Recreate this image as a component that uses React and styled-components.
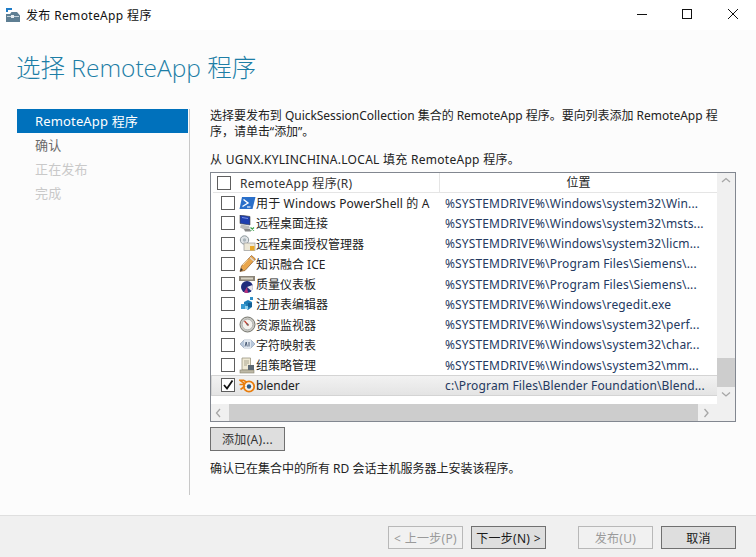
import React from 'react';
import styled, { createGlobalStyle } from 'styled-components';

const Global = createGlobalStyle`
  html, body { margin: 0; padding: 0; background: #fff; }
  body { font-family: "Noto Sans", "Noto Sans CJK SC", sans-serif; font-size: 12px; color: #1a1a1a; }
`;

const PowerShellIcon = () => (
  <svg width="17" height="17" viewBox="0 0 17 17">
    <path d="M3 2h13.5l-3 12H.5z" fill="#2a6fc9" />
    <path d="M4.5 4.5l4.5 3.5-5.5 3.5" fill="none" stroke="#fff" strokeWidth="1.4" />
    <path d="M8 12h3.5" stroke="#fff" strokeWidth="1.1" />
  </svg>
);

const DesktopIcon = () => (
  <svg width="17" height="17" viewBox="0 0 17 17">
    <path d="M1 0l10 1.5v8.5L1 8.5z" fill="#1f3fb0" stroke="#444" strokeWidth=".6" />
    <path d="M3 2.5l6 1" stroke="#7d96e6" strokeWidth="1" />
    <path d="M2 9.5l8 1.5 1 2.5-6 1-4-2z" fill="#bbb" />
    <path d="M5 14h6l1 2.5H6z" fill="#888" />
    <path d="M11.5 12.5l3.5 3m0-3l-3.5 3" stroke="#3aa04a" strokeWidth="1.2" />
  </svg>
);

const LicenseIcon = () => (
  <svg width="17" height="17" viewBox="0 0 17 17">
    <circle cx="5.5" cy="5" r="4.2" fill="#dfe3e6" stroke="#8d979c" />
    <circle cx="5.5" cy="5" r="1.7" fill="#a9b4ba" />
    <rect x="5" y="8" width="11" height="7.5" fill="#ece7d6" stroke="#999" strokeWidth=".7" />
    <rect x="11" y="11" width="4.5" height="4.5" fill="#e8a92a" />
  </svg>
);

const PencilIcon = () => (
  <svg width="17" height="17" viewBox="0 0 17 17">
    <path d="M12.5 .5l4 3.5L6 15.5l-5 1L2.5 11z" fill="#e9a64c" stroke="#8b5a2b" strokeWidth=".7" />
    <path d="M11 2.5l4 3.5" stroke="#d9d9d9" strokeWidth="1.4" />
    <path d="M4 10l5-5.5" stroke="#f7d9a4" strokeWidth="1" />
    <path d="M1 16.5L2 13l2 2z" fill="#333" />
  </svg>
);

const DashboardIcon = () => (
  <svg width="17" height="17" viewBox="0 0 17 17">
    <rect x="0" y="0" width="16" height="5" fill="#8b8478" />
    <rect x="2" y="1.5" width="12" height="2" fill="#d8d3c4" />
    <circle cx="8" cy="11" r="6" fill="#1f2c7c" />
    <path d="M8 11l5.5-2a6 6 0 0 1-1 6z" fill="#e8e6ef" />
    <path d="M8 11l-3 5a6 6 0 0 0 4 1z" fill="#b8337d" />
  </svg>
);

const RegistryIcon = () => (
  <svg width="17" height="17" viewBox="0 0 17 17">
    <path d="M5 6l4-2 4 2v5l-4 3-4-3z" fill="#1f7fb8" />
    <rect x="2" y="8" width="5" height="5" fill="#3a9bd0" />
    <rect x="9" y="7" width="4" height="4" fill="#155f95" />
    <rect x="11" y="1" width="3" height="3" fill="#2f8fc8" />
    <rect x="6" y="10" width="3" height="3" fill="#8fd0ee" />
  </svg>
);

const MonitorIcon = () => (
  <svg width="17" height="17" viewBox="0 0 17 17">
    <circle cx="8.5" cy="8.5" r="7.5" fill="#c9c9c4" stroke="#77776f" />
    <circle cx="8.5" cy="8.5" r="5.3" fill="#f4f3ee" stroke="#999" strokeWidth=".6" />
    <path d="M5.5 5l4 4.5" stroke="#c0392b" strokeWidth="1.2" />
    <circle cx="8.5" cy="8.5" r="1" fill="#666" />
  </svg>
);

const CharMapIcon = () => (
  <svg width="17" height="17" viewBox="0 0 17 17">
    <path d="M1 8l4-4h7l4 4-4 4H5z" fill="#b6c6da" stroke="#8c9bb0" strokeWidth=".6" />
    <rect x="5" y="4" width="7" height="8" fill="#dfe6ef" />
    <path d="M6 10.5L7.2 6l1 4.5M10 6v4.5" fill="none" stroke="#41526e" strokeWidth=".9" />
  </svg>
);

const PolicyIcon = () => (
  <svg width="17" height="17" viewBox="0 0 17 17">
    <path d="M3 1h8.5v12H3z" fill="#efe9d5" stroke="#9b9580" strokeWidth=".8" />
    <path d="M5 4h5M5 6h5M5 8h3" stroke="#9b9580" strokeWidth=".8" />
    <rect x="1" y="13" width="14" height="3" fill="#bdb8a6" stroke="#87826f" strokeWidth=".6" />
    <rect x="9" y="8" width="6" height="5" fill="#5e6a75" />
  </svg>
);

const BlenderIcon = () => (
  <svg width="17" height="17" viewBox="0 0 17 17">
    <path d="M.5 7.5h6L.8 3.2h3.8l6 3.6" fill="none" stroke="#e87d0d" strokeWidth="1.6" />
    <circle cx="10" cy="9.5" r="5.2" fill="#f7f2ea" stroke="#e87d0d" strokeWidth="1.8" />
    <circle cx="10" cy="9.5" r="2.2" fill="#265787" />
    <path d="M1.5 12.5l4.5-3.5" stroke="#e87d0d" strokeWidth="1.6" />
  </svg>
);

const ServerIcon = () => (
  <svg width="15" height="15" viewBox="0 0 15 15">
    <path d="M0 0h6v2H2v2H0z" fill="#1e7cc8" />
    <path d="M0 6h4l1.5-2H11l3 3.5V14H0z" fill="#5f7f93" />
    <rect x="1" y="8" width="12" height="1" fill="#c5d3dc" />
    <rect x="5" y="7" width="3" height="3" fill="#e6edf1" />
  </svg>
);

const ArrowIcon = ({ dir }) => {
  const paths = {
    up: 'M1 5l4-3.5L9 5',
    down: 'M1 1.5L5 5l4-3.5',
    left: 'M5 1L1.5 5 5 9',
    right: 'M1.5 1L5 5 1.5 9',
  };
  return (
    <svg width="10" height="10" viewBox="0 0 10 10">
      <path d={paths[dir]} fill="none" stroke="#a6a6a6" strokeWidth="1.3" />
    </svg>
  );
};

const rows = [
  { icon: <PowerShellIcon />, name: '用于 Windows PowerShell 的 A', path: '%SYSTEMDRIVE%\\Windows\\system32\\Win...', wide: true },
  { icon: <DesktopIcon />, name: '远程桌面连接', path: '%SYSTEMDRIVE%\\Windows\\system32\\msts...' },
  { icon: <LicenseIcon />, name: '远程桌面授权管理器', path: '%SYSTEMDRIVE%\\Windows\\system32\\licm...' },
  { icon: <PencilIcon />, name: '知识融合 ICE', path: '%SYSTEMDRIVE%\\Program Files\\Siemens\\...' },
  { icon: <DashboardIcon />, name: '质量仪表板', path: '%SYSTEMDRIVE%\\Program Files\\Siemens\\...' },
  { icon: <RegistryIcon />, name: '注册表编辑器', path: '%SYSTEMDRIVE%\\Windows\\regedit.exe' },
  { icon: <MonitorIcon />, name: '资源监视器', path: '%SYSTEMDRIVE%\\Windows\\system32\\perf...' },
  { icon: <CharMapIcon />, name: '字符映射表', path: '%SYSTEMDRIVE%\\Windows\\system32\\char...' },
  { icon: <PolicyIcon />, name: '组策略管理', path: '%SYSTEMDRIVE%\\Windows\\system32\\mm...' },
  { icon: <BlenderIcon />, name: 'blender', path: 'c:\\Program Files\\Blender Foundation\\Blend...', checked: true },
];

const steps = [
  { label: 'RemoteApp 程序', state: 'active' },
  { label: '确认', state: 'normal' },
  { label: '正在发布', state: 'disabled' },
  { label: '完成', state: 'disabled' },
];

const App = () => (
  <Window>
    <Global />
    <TitleBar>
      <TitleLeft>
        <ServerIcon />
        <span>发布 RemoteApp 程序</span>
      </TitleLeft>
      <WindowButtons>
        <svg width="12" height="12" viewBox="0 0 12 12"><path d="M0 6.5h10" stroke="#111" /></svg>
        <svg width="12" height="12" viewBox="0 0 12 12"><rect x=".5" y="1.5" width="9" height="9" fill="none" stroke="#111" /></svg>
        <svg width="12" height="12" viewBox="0 0 12 12"><path d="M1 1l10 10M11 1L1 11" stroke="#111" /></svg>
      </WindowButtons>
    </TitleBar>

    <Body>
      <Heading>选择 RemoteApp 程序</Heading>
      <Columns>
        <Nav>
          {steps.map(s => <NavItem key={s.label} $state={s.state}>{s.label}</NavItem>)}
        </Nav>
        <Content>
          <Intro>选择要发布到 QuickSessionCollection 集合的 RemoteApp 程序。要向列表添加 RemoteApp 程序，请单击“添加”。</Intro>
          <SourceLabel>从 UGNX.KYLINCHINA.LOCAL 填充 RemoteApp 程序。</SourceLabel>
          <ListBox>
            <ListMain>
              <HeaderRow>
                <HeaderName>
                  <Check />
                  <span>RemoteApp 程序(R)</span>
                </HeaderName>
                <HeaderPath>位置</HeaderPath>
              </HeaderRow>
              {rows.map(r => (
                <Row key={r.name} $selected={r.checked}>
                  <Check>
                    {r.checked && (
                      <svg width="12" height="12" viewBox="0 0 12 12">
                        <path d="M2 6l3 3.5L10.5 1.5" fill="none" stroke="#111" strokeWidth="1.8" />
                      </svg>
                    )}
                  </Check>
                  <RowIcon>{r.icon}</RowIcon>
                  <RowName $wide={r.wide}>{r.name}</RowName>
                  <RowPath>{r.path}</RowPath>
                </Row>
              ))}
            </ListMain>
            <VScroll>
              <ArrowBox $h={18}><ArrowIcon dir="up" /></ArrowBox>
              <Track />
              <VThumb />
              <ArrowBox $h={17}><ArrowIcon dir="down" /></ArrowBox>
            </VScroll>
            <HScroll>
              <ArrowBox $w={18}><ArrowIcon dir="left" /></ArrowBox>
              <HThumb />
              <ArrowBox $w={19}><ArrowIcon dir="right" /></ArrowBox>
            </HScroll>
            <Corner />
          </ListBox>
          <AddButton>添加(A)...</AddButton>
          <Note>确认已在集合中的所有 RD 会话主机服务器上安装该程序。</Note>
        </Content>
      </Columns>
    </Body>

    <Footer>
      <Button disabled>&lt; 上一步(P)</Button>
      <Button>下一步(N) &gt;</Button>
      <Button disabled $gap>发布(U)</Button>
      <Button>取消</Button>
    </Footer>
  </Window>
);

const Window = styled.div`
  width: 756px;
  height: 557px;
  display: flex;
  flex-direction: column;
  overflow: hidden;
  background: #fff;
`;

const TitleBar = styled.div`
  height: 30px;
  flex: none;
  display: flex;
  align-items: center;
  justify-content: space-between;
  background: #fff;
`;

const TitleLeft = styled.div`
  display: flex;
  align-items: center;
  gap: 5px;
  padding-left: 6px;
  color: #111;
  letter-spacing: .35px;
`;

const WindowButtons = styled.div`
  display: flex;
  gap: 33px;
  padding: 0 17px 2px 0;
`;

const Body = styled.div`
  flex: 1;
  min-height: 0;
  background: #fcfcfc;
  display: flex;
  flex-direction: column;
`;

const Heading = styled.h1`
  margin: 19px 0 0 16px;
  height: 60px;
  font-family: "Open Sans", "Noto Sans CJK SC", sans-serif;
  font-size: 24.5px;
  line-height: 38px;
  font-weight: 300;
  color: #1d7ea6;
`;

const Columns = styled.div`
  display: flex;
  padding-left: 17px;
`;

const Nav = styled.div`
  width: 172px;
  height: 386px;
  flex: none;
  border-right: 1px solid #c8c8c8;
`;

const navColors = { active: '#fff', normal: '#6b6b6b', disabled: '#c9c9c9' };

const NavItem = styled.div`
  width: 171px;
  height: 24px;
  box-sizing: border-box;
  padding-left: 18px;
  line-height: 24px;
  font-size: 13px;
  letter-spacing: .15px;
  color: ${p => navColors[p.$state]};
  background: ${p => (p.$state === 'active' ? '#0071bc' : 'transparent')};
`;

const Content = styled.div`
  margin-left: 20px;
  width: 526px;
  display: flex;
  flex-direction: column;
`;

const Intro = styled.p`
  margin: -1px 0 0;
  width: 520px;
  line-height: 16px;
  letter-spacing: -.03px;
  color: #222;
`;

const SourceLabel = styled.div`
  margin-top: 12px;
  line-height: 16px;
  letter-spacing: .28px;
  color: #222;
`;

const ListBox = styled.div`
  margin-top: 4px;
  height: 250px;
  box-sizing: border-box;
  border: 1px solid #828790;
  display: grid;
  grid-template-columns: 1fr 18px;
  grid-template-rows: 1fr 17px;
  background: #fff;
`;

const ListMain = styled.div`
  min-width: 0;
  overflow: hidden;
`;

const HeaderRow = styled.div`
  height: 19px;
  display: flex;
  margin-left: 2px;
  border-bottom: 1px solid #e5e5e5;
  background: #fff;
`;

const HeaderName = styled.div`
  width: 227px;
  flex: none;
  display: flex;
  align-items: center;
  gap: 9px;
  padding-left: 4px;
  box-sizing: border-box;
  border-right: 1px solid #e5e5e5;
  color: #333;
  letter-spacing: .3px;
`;

const HeaderPath = styled.div`
  flex: 1;
  text-align: center;
  line-height: 20px;
  color: #222;
`;

const Row = styled.div`
  height: 20.25px;
  box-sizing: border-box;
  display: flex;
  align-items: center;
  padding-left: 10px;
  ${p => p.$selected && `
    background: linear-gradient(#f2f2f2, #e4e4e4);
    border: 1px solid #d4d4d4;
    border-right: none;
    padding-left: 9px;
  `}
`;

const Check = styled.div`
  width: 14px;
  height: 14px;
  flex: none;
  box-sizing: border-box;
  border: 1px solid #5e5e5e;
  background: #fff;
  display: flex;
  align-items: center;
  justify-content: center;
`;

const RowIcon = styled.span`
  margin-left: 4px;
  width: 17px;
  height: 17px;
  flex: none;
  display: block;
`;

const RowName = styled.span`
  width: 177px;
  flex: none;
  overflow: hidden;
  white-space: nowrap;
  color: #222;
  letter-spacing: ${p => (p.$wide ? '.15px' : '0')};
`;

const RowPath = styled.span`
  margin-left: 12px;
  flex: 1;
  white-space: nowrap;
  overflow: hidden;
  color: #24395f;
  letter-spacing: .14px;
`;

const VScroll = styled.div`
  grid-row: 1;
  grid-column: 2;
  background: #f0f0f0;
  display: flex;
  flex-direction: column;
`;

const ArrowBox = styled.div`
  flex: none;
  ${p => p.$h && `height: ${p.$h}px;`}
  ${p => p.$w && `width: ${p.$w}px;`}
  display: flex;
  align-items: center;
  justify-content: center;
`;

const Track = styled.div`
  flex: 1;
`;

const VThumb = styled.div`
  height: 29px;
  flex: none;
  background: #cdcdcd;
`;

const HScroll = styled.div`
  grid-row: 2;
  grid-column: 1;
  background: #f0f0f0;
  display: flex;
`;

const HThumb = styled.div`
  flex: 1;
  background: #cdcdcd;
`;

const Corner = styled.div`
  grid-row: 2;
  grid-column: 2;
  background: #f0f0f0;
`;

const Button = styled.button`
  width: 75px;
  height: 23px;
  box-sizing: border-box;
  padding: 0;
  font: inherit;
  letter-spacing: .3px;
  border: 1px solid ${p => (p.disabled ? '#b8b8b8' : '#707070')};
  background: ${p => (p.disabled ? '#f1f1f1' : '#dedede')};
  color: ${p => (p.disabled ? '#9a9a9a' : '#1a1a1a')};
  margin-left: ${p => (p.$gap ? '32px' : '8px')};
`;

const AddButton = styled(Button)`
  margin: 5px 0 0;
  height: 24px;
  color: #333;
`;

const Note = styled.div`
  margin-top: 10px;
  line-height: 16px;
  color: #222;
`;

const Footer = styled.div`
  height: 42px;
  flex: none;
  box-sizing: border-box;
  border-top: 1px solid #dfdfdf;
  background: #f0f0f0;
  display: flex;
  justify-content: flex-end;
  align-items: flex-start;
  padding: 10px 20px 0 0;
`;

export default App;
